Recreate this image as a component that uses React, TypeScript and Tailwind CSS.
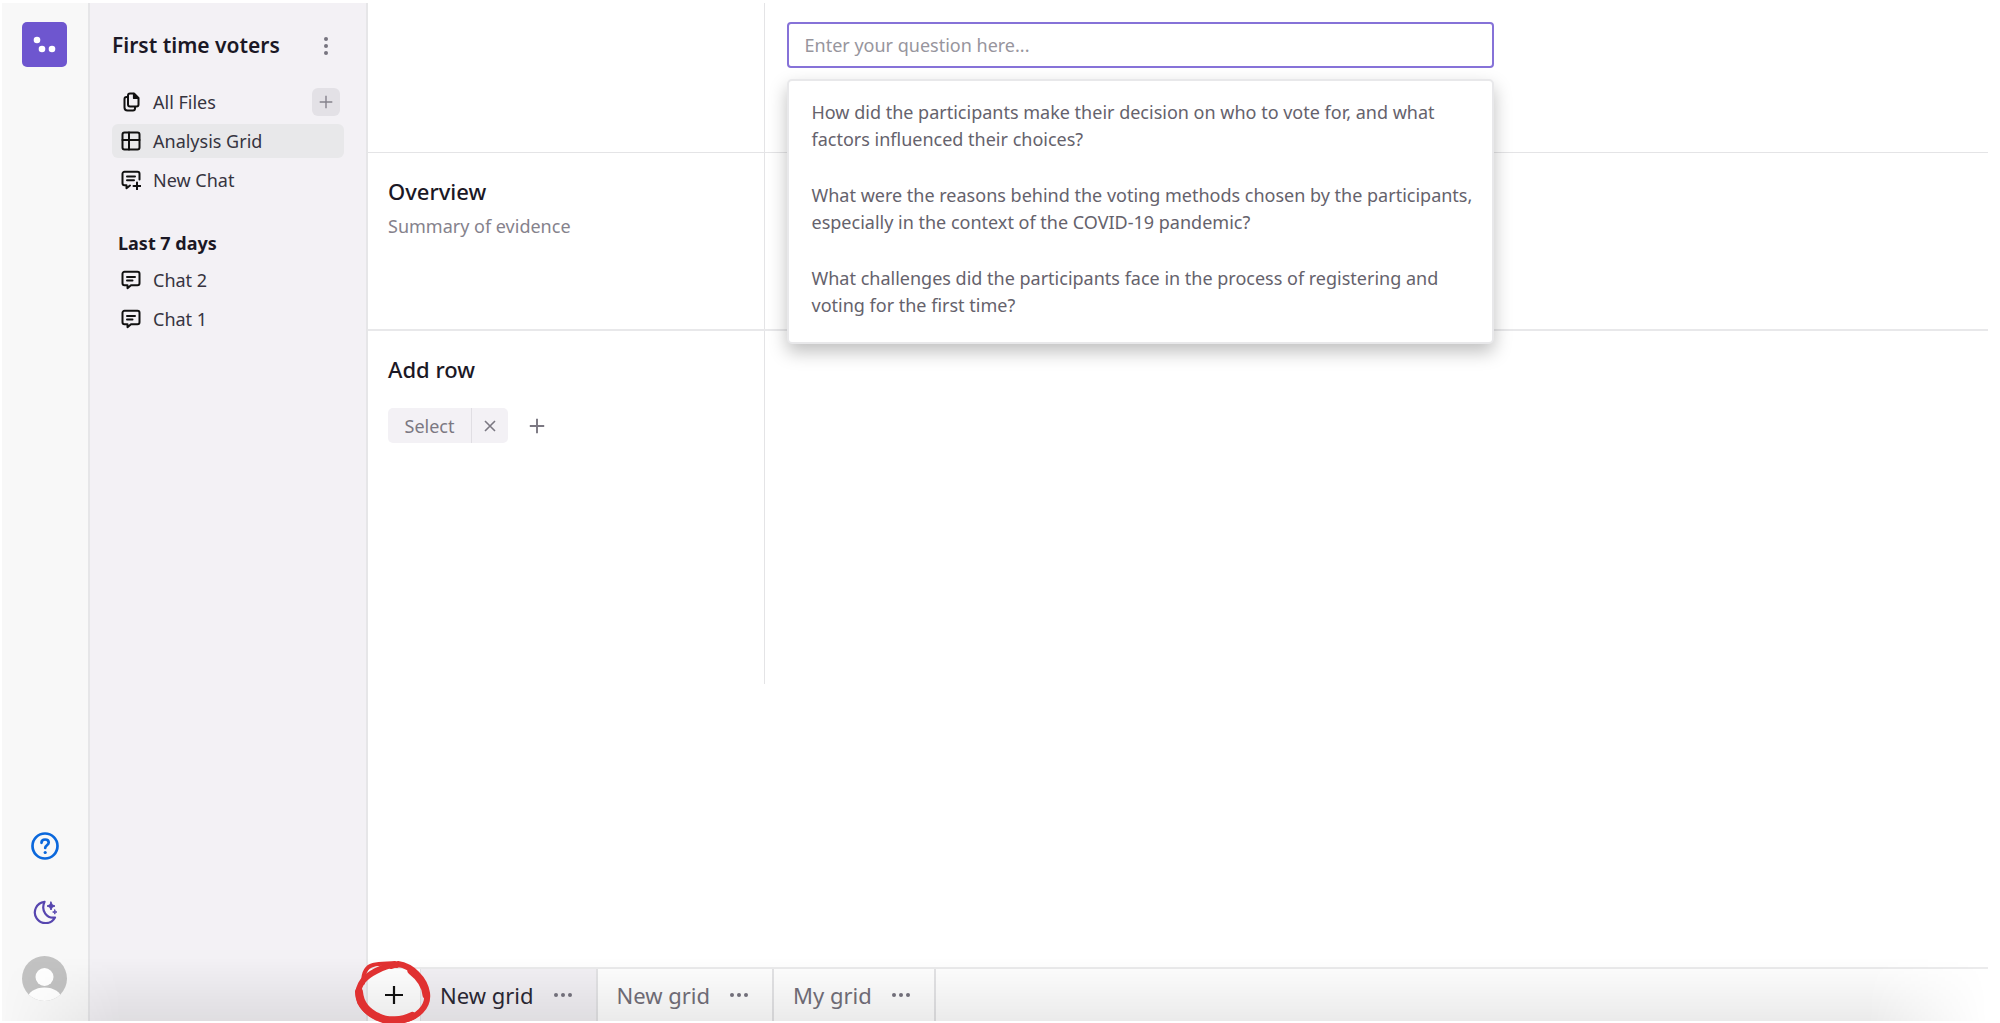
import { useState } from "react";
import type { ReactNode } from "react";

const QUESTIONS = [
    "How did the participants make their decision on who to vote for, and what factors influenced their choices?",
    "What were the reasons behind the voting methods chosen by the participants, especially in the context of the COVID-19 pandemic?",
    "What challenges did the participants face in the process of registering and voting for the first time?",
];

const TABS = [
    { key: "grid-1", label: "New grid" },
    { key: "grid-2", label: "New grid" },
    { key: "my-grid", label: "My grid" },
];

const iconProps = {
    fill: "none",
    stroke: "currentColor",
    strokeWidth: 2,
    strokeLinecap: "round",
    strokeLinejoin: "round",
} as const;

function FilesIcon() {
    return (
        <svg width="20" height="20" viewBox="0 0 20 20" {...iconProps}>
            <path d="M9 1.500h4l4.500 4.500v6.500a2 2 0 0 1-2 2H9a2 2 0 0 1-2-2v-9a2 2 0 0 1 2-2z" />
            <path d="M12.500 1.500v4.800h4.800z" fill="currentColor" strokeWidth="1.200" />
            <path d="M6.500 5h-1A2 2 0 0 0 3.500 7v8.500a3 3 0 0 0 3 3H12a2 2 0 0 0 2-2V15" />
        </svg>
    );
}

function GridIcon() {
    return (
        <svg width="20" height="20" viewBox="0 0 20 20" {...iconProps}>
            <rect x="1.500" y="1.500" width="17" height="17" rx="2" />
            <path d="M1.500 9h17M8 1.500v17" />
        </svg>
    );
}

function ChatIcon() {
    return (
        <svg width="20" height="20" viewBox="0 0 20 20" {...iconProps}>
            <path d="M3.500 1.800h13a2 2 0 0 1 2 2v9.400a2 2 0 0 1-2 2H10l-3.500 3v-3h-3a2 2 0 0 1-2-2V3.800a2 2 0 0 1 2-2z" />
            <path d="M6 7h8M6 10.500h5.500" />
        </svg>
    );
}

function NewChatIcon() {
    return (
        <svg width="20" height="20" viewBox="0 0 20 20" {...iconProps}>
            <path d="M18.500 9.500V3.800a2 2 0 0 0-2-2h-13a2 2 0 0 0-2 2v9.400a2 2 0 0 0 2 2h2v3l3.500-2.700" />
            <path d="M6 6.500h8M6 10.300h7" />
            <path d="M16 12.500v7M12.500 16h7" />
        </svg>
    );
}

function PlusIcon({ size, strokeWidth }: { size: number; strokeWidth: number }) {
    return (
        <svg width={size} height={size} viewBox="0 0 20 20" fill="none" stroke="currentColor" strokeWidth={strokeWidth}>
            <path d="M10 1v18M1 10h18" />
        </svg>
    );
}

function HelpIcon() {
    return (
        <svg width="28" height="28" viewBox="0 0 28 28" {...iconProps} strokeWidth={2.7}>
            <circle cx="14" cy="14" r="12.500" />
            <path d="M10.500 10.800c0-2 1.500-3.300 3.600-3.300s3.600 1.300 3.600 3.100c0 2.600-3.500 2.800-3.500 5.400" />
            <circle cx="14.200" cy="20.500" r="1.600" fill="currentColor" stroke="none" />
        </svg>
    );
}

function MoonIcon() {
    return (
        <svg width="24" height="24" viewBox="0 0 24 24" {...iconProps} strokeWidth={2.2}>
            <path d="M11.500 1.800A10.700 10.700 0 1 0 22 17.500C14 18.800 7.500 11 11.500 1.800z" />
            <path d="M18 2l1.200 2.800L22 6l-2.800 1.200L18 10l-1.200-2.800L14 6l2.800-1.200z" fill="currentColor" strokeWidth="1" />
            <path d="M21.800 9.800l.6 1.600 1.600.6-1.600.6-.6 1.600-.6-1.600-1.600-.6 1.600-.6z" fill="currentColor" strokeWidth="0.800" />
        </svg>
    );
}

function Dots({ vertical }: { vertical?: boolean }) {
    return vertical ? (
        <svg width="4" height="18" viewBox="0 0 4 18" fill="currentColor">
            <circle cx="2" cy="2" r="2" />
            <circle cx="2" cy="9" r="2" />
            <circle cx="2" cy="16" r="2" />
        </svg>
    ) : (
        <svg width="18" height="4" viewBox="0 0 18 4" fill="currentColor">
            <circle cx="2" cy="2" r="2" />
            <circle cx="9" cy="2" r="2" />
            <circle cx="16" cy="2" r="2" />
        </svg>
    );
}

function NavItem({ icon, label, active }: { icon: ReactNode; label: string; active?: boolean }) {
    return (
        <a
            href="#"
            className={`flex h-[34px] flex-1 items-center gap-3 rounded-md px-[9px] text-lg ${active ? "bg-[#e8e8ea]" : ""}`}
        >
            <span className="text-[#111]">{icon}</span>
            {label}
        </a>
    );
}

function Rail() {
    return (
        <div className="flex w-[88px] shrink-0 flex-col items-center border-r-2 border-[#e6e6e8] bg-[#f8f8f8] pt-[19px] pr-px pb-5">
            <a href="#" aria-label="Home">
                <svg width="45" height="45" viewBox="0 0 45 45">
                    <rect width="45" height="45" rx="5" fill="#6e56cf" />
                    <g fill="#fff">
                        <circle cx="15" cy="18" r="3.300" />
                        <circle cx="20" cy="27" r="3.300" />
                        <circle cx="30" cy="27" r="3.300" />
                    </g>
                </svg>
            </a>
            <div className="mt-auto flex flex-col items-center">
                <button aria-label="Help" className="text-[#0b68dc]">
                    <HelpIcon />
                </button>
                <button aria-label="Dark mode" className="mt-10 text-[#5746af]">
                    <MoonIcon />
                </button>
                <button aria-label="Account" className="mt-8">
                    <svg width="45" height="45" viewBox="0 0 45 45">
                        <clipPath id="avatar">
                            <circle cx="22.500" cy="22.500" r="22.500" />
                        </clipPath>
                        <g clipPath="url(#avatar)">
                            <rect width="45" height="45" fill="#c2c2c2" />
                            <circle cx="22.500" cy="21" r="9" fill="#fff" />
                            <ellipse cx="22.500" cy="43" rx="17" ry="11.500" fill="#fff" />
                        </g>
                    </svg>
                </button>
            </div>
        </div>
    );
}

function SidePanel() {
    return (
        <aside className="w-[278px] shrink-0 border-r-2 border-[#e6e6e8] bg-[#f3f1f5] px-[22px] pt-[27px] text-[#36343f]">
            <div className="flex h-8 items-center justify-between pr-4">
                <h1 className="text-[21px] font-semibold text-[#1b1825]">First time voters</h1>
                <button aria-label="Project options" className="text-[#77747f]">
                    <Dots vertical />
                </button>
            </div>
            <nav className="mt-[23px] flex flex-col gap-[5px]">
                <div className="flex items-center pr-1">
                    <NavItem icon={<FilesIcon />} label="All Files" />
                    <button
                        aria-label="Add files"
                        className="flex size-[28px] items-center justify-center rounded-md bg-[#e3e1e6] text-[#85828c]"
                    >
                        <PlusIcon size={14} strokeWidth={2} />
                    </button>
                </div>
                <div className="flex">
                    <NavItem icon={<GridIcon />} label="Analysis Grid" active />
                </div>
                <div className="flex">
                    <NavItem icon={<NewChatIcon />} label="New Chat" />
                </div>
            </nav>
            <h2 className="mt-8 ml-[6px] text-lg font-bold text-[#1b1825]">Last 7 days</h2>
            <nav className="mt-[6px] flex flex-col gap-[5px]">
                <div className="flex">
                    <NavItem icon={<ChatIcon />} label="Chat 2" />
                </div>
                <div className="flex">
                    <NavItem icon={<ChatIcon />} label="Chat 1" />
                </div>
            </nav>
        </aside>
    );
}

function QuestionBox() {
    const [question, setQuestion] = useState("");

    return (
        <div className="relative w-[707px]">
            <input
                type="text"
                aria-label="Question"
                value={question}
                onChange={(e) => setQuestion(e.target.value)}
                placeholder="Enter your question here..."
                className="block h-[46px] w-full rounded-[4px] border-2 border-[#8672d8] bg-white px-4 text-lg outline-none placeholder:text-[#97959d]"
            />
            {/* Suggestions */}
            <ul className="absolute top-[57px] left-0 z-10 w-full rounded-[5px] border-2 border-[#e8e8ea] bg-white pb-3 shadow-[0_8px_18px_rgba(0,0,0,0.25)]">
                {QUESTIONS.map((text) => (
                    <li key={text}>
                        <button
                            onClick={() => setQuestion(text)}
                            className="block w-full pt-[18px] pr-3 pb-[11px] pl-[23px] text-left text-lg/[27px] text-[#65626c]"
                        >
                            {text}
                        </button>
                    </li>
                ))}
            </ul>
        </div>
    );
}

function AnalysisTable() {
    return (
        <table className="w-full border-collapse text-left align-top">
            <tbody>
                <tr className="h-[149px] border-b border-[#e4e4e6]">
                    <th className="w-[396px] border-r border-[#e4e4e6]" />
                    <td className="px-[22px] pt-[19px] align-top">
                        <QuestionBox />
                    </td>
                </tr>
                <tr className="h-[178px] border-b-2 border-[#e8e8ea]">
                    <th className="border-r border-[#e4e4e6] px-5 pt-[23px] align-top font-normal">
                        <div className="text-[22px]/[30px] font-medium text-[#1b1825]">Overview</div>
                        <div className="mt-2 text-lg/[24px] text-[#85828c]">Summary of evidence</div>
                    </th>
                    <td />
                </tr>
                <tr className="h-[354px]">
                    <th className="border-r border-[#e4e4e6] px-5 pt-[23px] align-top font-normal">
                        <div className="text-[22px]/[30px] font-medium text-[#1b1825]">Add row</div>
                        <div className="mt-6 flex items-center text-[#7b7882]">
                            <div className="flex h-[35px] overflow-hidden rounded-[5px] bg-[#f3f1f5]">
                                <button className="w-[83px] text-lg">Select</button>
                                <button
                                    aria-label="Remove row"
                                    className="flex w-[37px] items-center justify-center border-l border-[#e0dee3]"
                                >
                                    <svg width="12" height="12" viewBox="0 0 12 12" stroke="currentColor" strokeWidth="1.600">
                                        <path d="M1 1l10 10M11 1L1 11" />
                                    </svg>
                                </button>
                            </div>
                            <button aria-label="Add row" className="ml-[21px]">
                                <PlusIcon size={16} strokeWidth={2.4} />
                            </button>
                        </div>
                    </th>
                    <td />
                </tr>
            </tbody>
        </table>
    );
}

function TabBar() {
    const [active, setActive] = useState("grid-1");

    return (
        <div className="relative mt-auto flex h-[54px] border-t-2 border-[#ebebec]">
            <button aria-label="Add grid" className="flex w-[53px] items-center justify-center border-r border-[#e4e4e6] text-[#111]">
                <PlusIcon size={20} strokeWidth={2.2} />
            </button>
            {TABS.map(({ key, label }) => (
                <div
                    key={key}
                    className={`flex items-center gap-5 border-r-2 border-[#e4e4e6] pr-6 pl-[19px] ${active === key
                        ? "bg-[#f3f1f5] text-[#2c2935]"
                        : "text-[#73707a]"
                        }`}
                >
                    <button onClick={() => setActive(key)} className="text-[22px]">
                        {label}
                    </button>
                    <button aria-label={`${label} options`} className="text-[#77747f]">
                        <Dots />
                    </button>
                </div>
            ))}
            {/* Hand-drawn ring around the add button */}
            <svg
                className="pointer-events-none absolute -top-[10px] -left-[14px] z-20"
                width="78"
                height="66"
                viewBox="0 0 78 66"
                fill="none"
                stroke="#e03131"
                strokeLinecap="round"
            >
                <path d="M44 5C58 7 71 20 73 34C75 48 63 59 48 61C30 64 13 56 6 43C1 30 8 19 22 12C30 8 38 5 43 6" strokeWidth="6" />
                <path d="M9 24C9 15 11 8 19 6C27 4 35 5 41 4M37 8L43 6" strokeWidth="4" />
                <path d="M5 33C6 45 13 53 24 58C34 63 48 62 58 57" strokeWidth="8" />
                <path d="M57 12C66 19 71 27 72 36" strokeWidth="7" />
            </svg>
        </div>
    );
}

export default function App() {
    return (
        <div className="h-screen bg-white pt-[3px] pr-3 pb-[2px] pl-[2px] font-['Noto_Sans',sans-serif]">
            <div className="relative flex h-full">
                <Rail />
                <SidePanel />
                <main className="flex min-w-0 flex-1 flex-col">
                    <AnalysisTable />
                    <TabBar />
                </main>
                <div className="pointer-events-none absolute inset-x-0 bottom-0 h-16 bg-linear-to-b from-transparent to-black/8 [mask-image:linear-gradient(to_right,transparent,black_120px,black_calc(100%-120px),transparent)]" />
            </div>
        </div>
    );
}
